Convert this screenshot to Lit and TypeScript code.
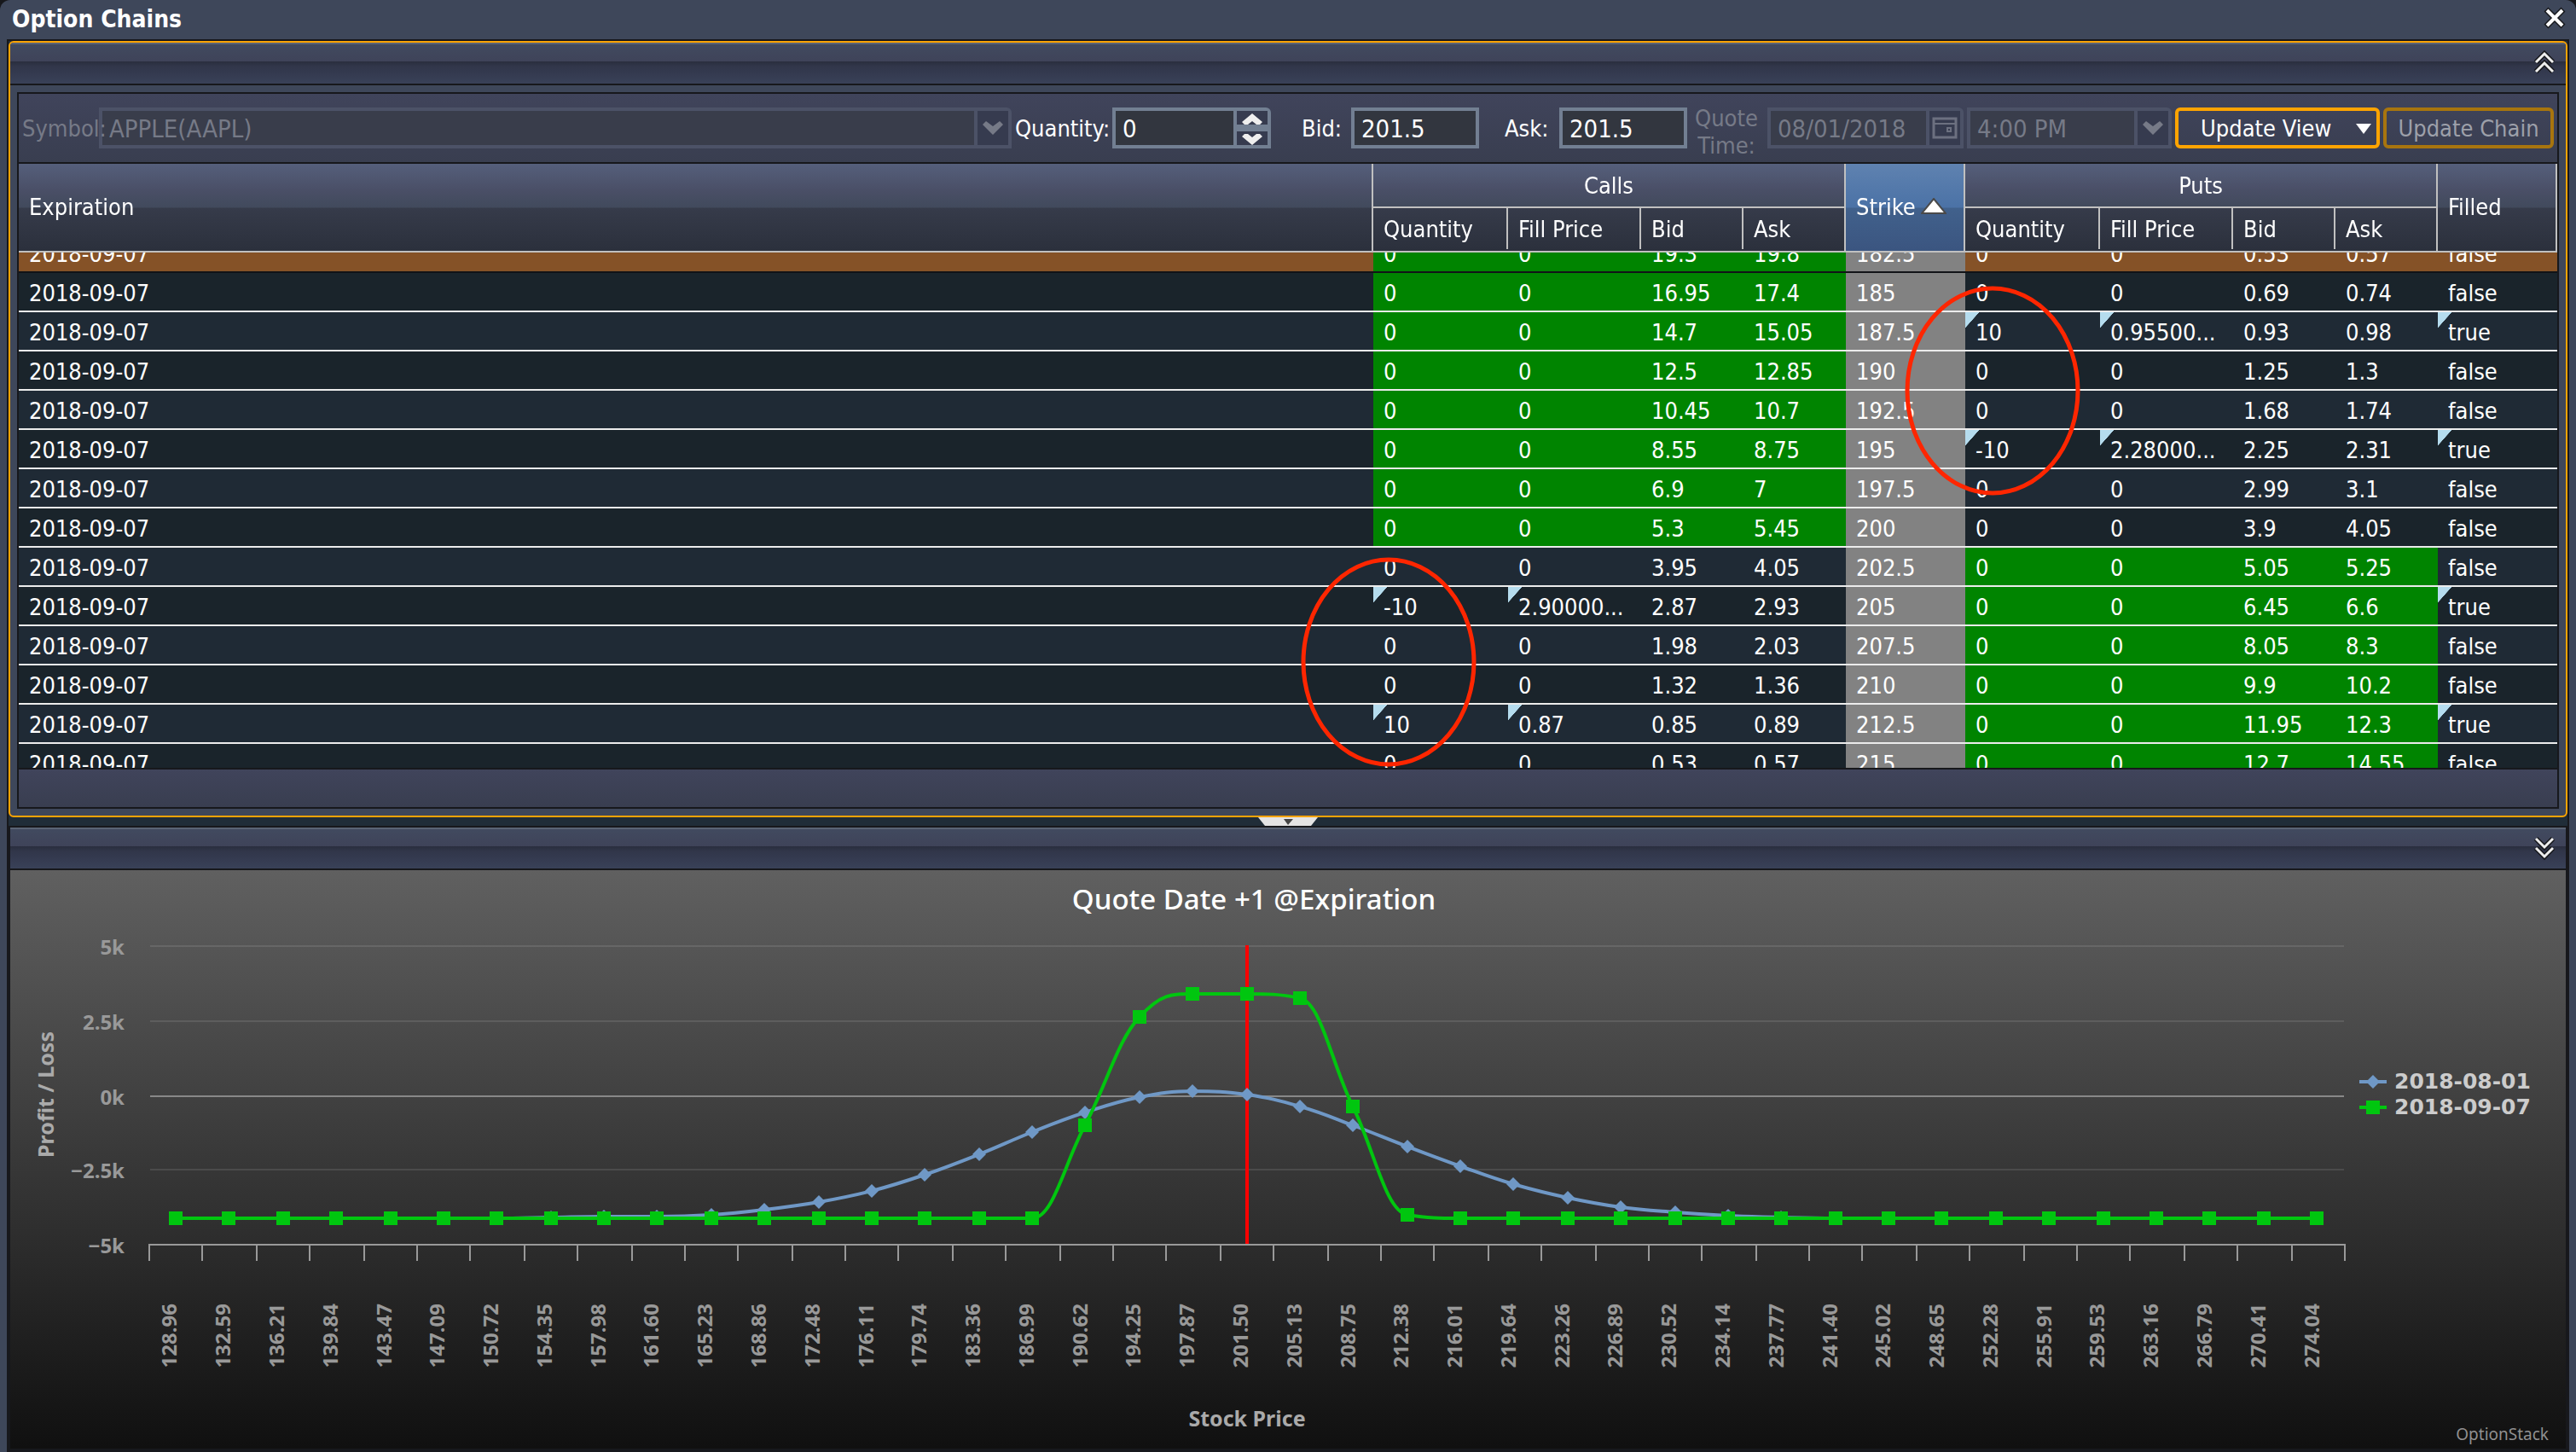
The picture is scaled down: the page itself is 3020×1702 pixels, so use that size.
import { LitElement, html, svg, css } from "lit";
import { customElement, state } from "lit/decorators.js";
import { classMap } from "lit/directives/class-map.js";

interface Side {
  quantity: string;
  fill: string;
  bid: string;
  ask: string;
}

interface OptionRow {
  expiration: string;
  strike: number;
  calls: Side;
  puts: Side;
  filled: boolean;
  selected?: boolean;
}

const EXPIRATION = "2018-09-07";
const SPOT = 201.5;

const side = (bid: string, ask: string, quantity = "0", fill = "0"): Side => ({ quantity, fill, bid, ask });

const row = (strike: number, calls: Side, puts: Side, selected = false): OptionRow => ({
  expiration: EXPIRATION,
  strike,
  calls,
  puts,
  filled: calls.quantity !== "0" || puts.quantity !== "0",
  selected,
});

const ROWS: OptionRow[] = [
  row(182.5, side("19.3", "19.8"), side("0.53", "0.57"), true),
  row(185, side("16.95", "17.4"), side("0.69", "0.74")),
  row(187.5, side("14.7", "15.05"), side("0.93", "0.98", "10", "0.95500...")),
  row(190, side("12.5", "12.85"), side("1.25", "1.3")),
  row(192.5, side("10.45", "10.7"), side("1.68", "1.74")),
  row(195, side("8.55", "8.75"), side("2.25", "2.31", "-10", "2.28000...")),
  row(197.5, side("6.9", "7"), side("2.99", "3.1")),
  row(200, side("5.3", "5.45"), side("3.9", "4.05")),
  row(202.5, side("3.95", "4.05"), side("5.05", "5.25")),
  row(205, side("2.87", "2.93", "-10", "2.90000..."), side("6.45", "6.6")),
  row(207.5, side("1.98", "2.03"), side("8.05", "8.3")),
  row(210, side("1.32", "1.36"), side("9.9", "10.2")),
  row(212.5, side("0.85", "0.89", "10", "0.87"), side("11.95", "12.3")),
  row(215, side("0.53", "0.57"), side("12.7", "14.55")),
];

const PRICES = [
  "128.96", "132.59", "136.21", "139.84", "143.47", "147.09", "150.72", "154.35", "157.98", "161.60", "165.23",
  "168.86", "172.48", "176.11", "179.74", "183.36", "186.99", "190.62", "194.25", "197.87", "201.50", "205.13",
  "208.75", "212.38", "216.01", "219.64", "223.26", "226.89", "230.52", "234.14", "237.77", "241.40", "245.02",
  "248.65", "252.28", "255.91", "259.53", "263.16", "266.79", "270.41", "274.04",
];

/* Profit and loss in dollars, one value for each stock price. */
const fill = (n: number, v: number): number[] => new Array<number>(n).fill(v);
const EXPIRY_PL = [...fill(17, -4115), -1000, 2630, 3390, 3390, 3260, -370, -4000, ...fill(17, -4115)];
const TODAY_PL = [
  ...fill(7, -4115), -4090, -4070, -4050, -4000, -3840, -3585, -3200, -2655, -1970, -1225, -570, -55, 143, 30, -370,
  -1000, -1715, -2385, -2970, -3430, -3730, -3915, -4030, -4085, ...fill(10, -4115),
];

const PLOT = { left: 163, right: 2737, top: 89, bottom: 439 };
const STEP = (PLOT.right - PLOT.left) / PRICES.length;
const FIRST_POINT = 194;
const LAST_POINT = 2704;
const even = (v: number): number => Math.round(v / 2) * 2;
const odd = (v: number): number => Math.round((v - 1) / 2) * 2 + 1;
const xOf = (i: number): number => even(FIRST_POINT + (i * (LAST_POINT - FIRST_POINT)) / (PRICES.length - 1));
const yOf = (v: number): number => Math.round(PLOT.top + ((5000 - v) / 10000) * (PLOT.bottom - PLOT.top));

type Point = [number, number];

function spline(points: Point[]): string {
  let d = `M${points[0][0]} ${points[0][1]}`;
  let out: Point = points[0];
  for (let i = 1; i < points.length; i++) {
    const [lx, ly] = points[i - 1];
    const [x, y] = points[i];
    let inn: Point = [x, y];
    let next: Point = [x, y];
    if (i < points.length - 1) {
      const [nx, ny] = points[i + 1];
      const ax = (1.5 * x + lx) / 2.5;
      const bx = (1.5 * x + nx) / 2.5;
      let ay = (1.5 * y + ly) / 2.5;
      let by = (1.5 * y + ny) / 2.5;
      const correction = ((by - ay) * (bx - x)) / (bx - ax) + y - by;
      ay += correction;
      by += correction;
      if (ay > ly && ay > y) {
        ay = Math.max(ly, y);
        by = 2 * y - ay;
      } else if (ay < ly && ay < y) {
        ay = Math.min(ly, y);
        by = 2 * y - ay;
      }
      if (by > ny && by > y) {
        by = Math.max(ny, y);
        ay = 2 * y - by;
      } else if (by < ny && by < y) {
        by = Math.min(ny, y);
        ay = 2 * y - by;
      }
      inn = [ax, ay];
      next = [bx, by];
    }
    d += `C${out[0]} ${out[1]} ${inn[0]} ${inn[1]} ${x} ${y}`;
    out = next;
  }
  return d;
}

@customElement("payoff-chart")
export class PayoffChart extends LitElement {
  static styles = css`
    :host {
      display: block;
      min-height: 0;
      background: linear-gradient(#606060, #101010);
    }
    .chart {
      display: block;
      width: 100%;
      height: 100%;
    }
    .title {
      font: 500 33px "Noto Sans", sans-serif;
      fill: #fff;
      text-anchor: middle;
    }
    .tick-label {
      font: bold 24px "Noto Sans", sans-serif;
      fill: #999;
      text-anchor: end;
    }
    .axis-title {
      font: bold 25px "Noto Sans", sans-serif;
      fill: #aaa;
      text-anchor: middle;
    }
    .legend-label {
      font: bold 25px "DejaVu Sans", sans-serif;
      fill: #ccc;
    }
    .credit {
      font: 19px "Noto Sans", sans-serif;
      fill: #909090;
      text-anchor: end;
    }
    .grid {
      stroke: rgba(255, 255, 255, 0.1);
      stroke-width: 2;
    }
    .zero {
      stroke: #888;
      stroke-width: 2;
    }
    .axis {
      stroke: #999;
      stroke-width: 2;
    }
    .spot {
      stroke: #f00;
      stroke-width: 4;
    }
    .line {
      fill: none;
      stroke-width: 4;
      stroke-linejoin: round;
    }
    .today {
      stroke: #6f98c6;
    }
    .today-mark {
      fill: #6f98c6;
    }
    .expiry {
      stroke: #00c60f;
    }
    .expiry-mark {
      fill: #00c60f;
    }
  `;

  private diamond(x: number, y: number) {
    return svg`<path class="today-mark" d=${`M${x} ${y - 8}L${x + 8} ${y}L${x} ${y + 8}L${x - 8} ${y}Z`}></path>`;
  }

  private square(x: number, y: number) {
    return svg`<rect class="expiry-mark" x=${x - 8} y=${y - 8} width="16" height="16"></rect>`;
  }

  render() {
    const levels: [string, number][] = [["5k", 89], ["2.5k", 177], ["0k", 265], ["−2.5k", 351], ["−5k", 439]];
    const today = TODAY_PL.map((v, i): Point => [xOf(i), yOf(v)]);
    const expiry = EXPIRY_PL.map((v, i): Point => [xOf(i), yOf(v)]);
    const ticks = Array.from({ length: PRICES.length + 1 }, (_, i) => odd(PLOT.left + i * STEP));
    return html`
      <svg class="chart" viewBox="0 0 2996 678" role="img" aria-label="Profit and loss by stock price">
        <text class="title" x="1458" y="46">Quote Date +1 @Expiration</text>
        ${levels.map(
          ([label, y]) => svg`
            ${label === "−5k" ? null : svg`<line class=${label === "0k" ? "zero" : "grid"} x1="164" x2="2736" y1=${y} y2=${y}></line>`}
            <text class="tick-label" x="134" y=${y + 10}>${label}</text>`
        )}
        <line class="axis" x1="162" x2="2738" y1="439" y2="439"></line>
        ${ticks.map((x) => svg`<line class="axis" x1=${x} x2=${x} y1="440" y2="458"></line>`)}
        ${PRICES.map((p, i) => {
          const x = Math.round(PLOT.left + (i + 0.5) * STEP) + 1;
          return svg`<text class="tick-label" x=${x} y="508" transform=${`rotate(-90 ${x} 508)`}>${p}</text>`;
        })}
        <text class="axis-title" x="51" y="263" transform="rotate(-90 51 263)">Profit / Loss</text>
        <text class="axis-title" x="1450" y="652">Stock Price</text>
        <line class="spot" x1="1450" x2="1450" y1="88" y2="438"></line>
        <path class="line today" d=${spline(today)}></path>
        ${today.map(([x, y]) => this.diamond(x, y))}
        <path class="line expiry" d=${spline(expiry)}></path>
        ${expiry.map(([x, y]) => this.square(x, y))}
        <line class="line today" x1="2754" x2="2786" y1="248" y2="248"></line>
        ${this.diamond(2770, 248)}
        <text class="legend-label" x="2795" y="256">2018-08-01</text>
        <line class="line expiry" x1="2754" x2="2786" y1="278" y2="278"></line>
        ${this.square(2770, 278)}
        <text class="legend-label" x="2795" y="286">2018-09-07</text>
        <text class="credit" x="2976" y="668">OptionStack</text>
      </svg>
    `;
  }
}

@customElement("chain-grid")
export class ChainGrid extends LitElement {
  static styles = css`
    :host {
      display: block;
      overflow: hidden;
      height: 708px;
    }
    .table {
      width: 100%;
      table-layout: fixed;
      border-spacing: 0;
      color: #fff;
      font: 27px/40px "DejaVu Sans Condensed", "DejaVu Sans", sans-serif;
    }
    .w-qty { width: 158px; }
    .w-fill { width: 156px; }
    .w-price { width: 120px; }
    .w-strike { width: 140px; }
    .head {
      position: sticky;
      top: 0;
      z-index: 1;
    }
    .th {
      box-sizing: border-box;
      height: 52px;
      padding: 0 10px 0 12px;
      font-weight: normal;
      line-height: 48px;
      text-align: left;
      white-space: nowrap;
      border-right: 2px solid #c0c0c0;
      border-bottom: 2px solid #c0c0c0;
      background: linear-gradient(#555f7b, #4a4f67 60%, #414a5c);
    }
    .tall {
      height: 104px;
      background: linear-gradient(#555f7b, #4a4f67 30%, #414a5c 50%, #363b4a 51%, #2b303c);
    }
    .sorted {
      padding-right: 0;
      background: linear-gradient(#5f82b0, #4b72a6 50%, #41618c 51%, #3b5580);
    }
    .group {
      text-align: center;
      padding: 2px 0 0;
    }
    .sub {
      border-right: 0;
      background:
        linear-gradient(#c0c0c0, #c0c0c0) right top / 2px 48px no-repeat,
        linear-gradient(#363b4a, #2b303c);
    }
    .sub-last {
      border-right: 2px solid #c0c0c0;
      background: linear-gradient(#363b4a, #2b303c);
    }
    .arrow {
      vertical-align: middle;
      margin: 0 0 6px 6px;
    }
    .row { background: #1f2a35; }
    .alt { background: #1a242b; }
    .selected { background: #855227; }
    .td {
      box-sizing: border-box;
      height: 46px;
      padding: 4px 0 0 12px;
      overflow: hidden;
      white-space: nowrap;
      border-bottom: 2px solid #ececec;
    }
    .selected .td { border-bottom-color: #111317; }
    .money { background-color: #008400; }
    .strike { background-color: #828282; }
    .dirty {
      background-image: linear-gradient(to bottom right, #b5dcee 50%, transparent 52%);
      background-repeat: no-repeat;
      background-size: 16px 18px;
    }
  `;

  firstUpdated() {
    this.scrollTop = 22;
  }

  private sideCells(s: Side, inTheMoney: boolean) {
    const dirty = s.quantity !== "0";
    const edit = classMap({ td: true, money: inTheMoney, dirty });
    const plain = classMap({ td: true, money: inTheMoney });
    return html`<td class=${edit}>${s.quantity}</td><td class=${edit}>${s.fill}</td><td class=${plain}>${s.bid}</td><td class=${plain}>${s.ask}</td>`;
  }

  render() {
    const subs = html`
      <th class="th sub" scope="col">Quantity</th>
      <th class="th sub" scope="col">Fill Price</th>
      <th class="th sub" scope="col">Bid</th>
      <th class="th sub sub-last" scope="col">Ask</th>
    `;
    const sideCols = html`<col class="w-qty" /><col class="w-fill" /><col class="w-price" /><col class="w-price" />`;
    return html`
      <table class="table">
        <colgroup>
          <col />${sideCols}<col class="w-strike" />${sideCols}<col class="w-strike" />
        </colgroup>
        <thead class="head">
          <tr>
            <th class="th tall" rowspan="2" scope="col">Expiration</th>
            <th class="th group" colspan="4" scope="colgroup">Calls</th>
            <th class="th tall sorted" rowspan="2" scope="col" aria-sort="ascending">
              Strike<svg class="arrow" width="30" height="20" viewBox="0 0 30 20">
                <path d="M15 1L29 18H1Z" fill="#fff" stroke="#4a4a4a" stroke-width="2"></path>
              </svg>
            </th>
            <th class="th group" colspan="4" scope="colgroup">Puts</th>
            <th class="th tall" rowspan="2" scope="col">Filled</th>
          </tr>
          <tr>${subs}${subs}</tr>
        </thead>
        <tbody>
          ${ROWS.map(
            (r, i) => html`
              <tr class=${classMap({ row: true, alt: i % 2 === 1, selected: !!r.selected })}>
                <td class="td">${r.expiration}</td>
                ${this.sideCells(r.calls, r.strike < SPOT)}
                <td class="td strike">${r.strike}</td>
                ${this.sideCells(r.puts, r.strike > SPOT)}
                <td class=${classMap({ td: true, dirty: r.filled })}>${r.filled}</td>
              </tr>
            `
          )}
        </tbody>
      </table>
    `;
  }
}

@customElement("app-root")
export class AppRoot extends LitElement {
  static styles = css`
    :host {
      display: block;
      background: #17181c;
      font: 27px/32px "DejaVu Sans Condensed", "DejaVu Sans", sans-serif;
      color: #fff;
    }
    .window {
      position: relative;
      box-sizing: border-box;
      display: flex;
      flex-direction: column;
      height: 100vh;
      padding: 0 8px;
      border-radius: 12px 12px 0 0;
      background: #3e475a;
    }
    .titlebar {
      display: flex;
      align-items: center;
      justify-content: space-between;
      height: 46px;
      padding: 0 4px 0 6px;
    }
    .heading {
      margin: 0;
      font-size: 28px;
      line-height: 46px;
      font-weight: bold;
    }
    .tool {
      display: flex;
      padding: 0;
      border: 0;
      background: none;
    }
    .titlebar .tool { padding-bottom: 4px; }
    .body {
      flex: 1;
      min-height: 0;
      display: flex;
      flex-direction: column;
      border: 2px solid #17181c;
      border-bottom: 0;
      background: #202d38;
    }
    .panel {
      border: 2px solid #ffa400;
      border-radius: 6px;
      background: #3e475a;
      overflow: hidden;
    }
    .panel-head {
      display: flex;
      align-items: center;
      justify-content: flex-end;
      height: 46px;
      padding-right: 12px;
      border-top: 2px solid #5a6475;
      border-bottom: 2px solid #17181c;
      background: linear-gradient(#414a5f, #3f4359 44%, #2a2e3e 44%, #31364a 56%, #394158);
    }
    .panel-head .tool { padding-bottom: 2px; }
    .content {
      margin: 8px;
      border: 2px solid #17181c;
    }
    .toolbar {
      display: flex;
      align-items: center;
      height: 80px;
      padding: 0 4px;
      border-bottom: 2px solid #17181c;
      background: linear-gradient(#40445b, #393e50);
    }
    .footer {
      height: 44px;
      border-top: 2px solid #17181c;
      background: linear-gradient(#40445b, #393e50);
    }
    .label {
      flex: none;
      z-index: 1;
      padding-top: 2px;
      white-space: nowrap;
    }
    .muted { color: #767a87; }
    .l-symbol { width: 90px; }
    .l-quantity { width: 114px; margin-left: 4px; }
    .l-bid { width: 58px; margin-left: 36px; }
    .l-ask { width: 64px; margin-left: 30px; }
    .l-quote { width: 84px; margin: 8px 6px 0 4px; white-space: normal; text-align: center; }
    .field {
      box-sizing: border-box;
      flex: none;
      display: flex;
      height: 48px;
      border: 4px solid #727f92;
      background: #32363f;
    }
    .off {
      border-color: #4c5267;
      background: #393d4b;
    }
    .f-symbol { flex: 1; min-width: 200px; border-top-right-radius: 6px; }
    .f-quantity { width: 186px; border-top-right-radius: 6px; }
    .f-price { width: 150px; }
    .f-date { width: 230px; border-top-right-radius: 6px; }
    .f-time { width: 240px; margin-left: 4px; border-top-right-radius: 6px; }
    .control {
      appearance: none;
      box-sizing: border-box;
      flex: 1;
      min-width: 0;
      width: 100%;
      height: 40px;
      margin: 0;
      padding: 2px 0 0 8px;
      border: 0;
      border-radius: 0;
      outline: 0;
      background: none;
      color: #fff;
      font: 29px/38px "DejaVu Sans Condensed", "DejaVu Sans", sans-serif;
    }
    .off .control {
      color: #767a87;
      opacity: 1;
    }
    .trigger {
      box-sizing: border-box;
      flex: none;
      display: flex;
      align-items: center;
      justify-content: center;
      width: 40px;
      height: 40px;
      padding: 0;
      border: 0;
      border-left: 4px solid #4c5267;
      background: #363b4f;
    }
    .spinner {
      flex: none;
      display: flex;
      flex-direction: column;
      justify-content: space-between;
      width: 36px;
      border-left: 4px solid #727f92;
      background: #727f92;
    }
    .spin {
      display: flex;
      align-items: flex-end;
      justify-content: center;
      height: 16px;
      padding: 0;
      border: 0;
      background: #363b4f;
    }
    .button {
      box-sizing: border-box;
      flex: none;
      display: flex;
      align-items: center;
      justify-content: center;
      height: 48px;
      margin-left: 4px;
      padding: 2px 0 0;
      border: 4px solid #ffa400;
      border-radius: 6px;
      background: none;
      color: #fff;
      font: inherit;
    }
    .b-view { width: 240px; padding: 2px 6px 0 26px; justify-content: space-between; }
    .b-chain { width: 200px; border-color: #a8750e; color: #9da0aa; }
    .splitter {
      display: flex;
      justify-content: center;
      height: 10px;
    }
    .lower {
      flex: 1;
      min-height: 0;
      display: flex;
      flex-direction: column;
      border: 2px solid #17181c;
      border-bottom-width: 4px;
    }
    .lower .panel-head { flex: none; }
    .plot { flex: 1; }
    .marks {
      position: absolute;
      z-index: 2;
      inset: 0;
      width: 100%;
      height: 100%;
      pointer-events: none;
    }
  `;

  @state() private quantity = 0;

  private spin(by: number) {
    this.quantity += by;
  }

  private downIcon() {
    return html`<svg width="24" height="16" viewBox="0 0 24 16"><path d="M0 4L4 0L12 6L20 0L24 4L12 16Z" fill="#767a87"></path></svg>`;
  }

  private doubleChevron(up: boolean) {
    const d = up ? "M3 14L13 4L23 14M3 25L13 15L23 25" : "M3 4L13 14L23 4M3 15L13 25L23 15";
    return html`<svg width="26" height="30" viewBox="0 0 26 30" fill="none">
      <path d=${d} stroke="#17181c" stroke-width="6"></path>
      <path d=${d} stroke="#eee" stroke-width="3"></path>
    </svg>`;
  }

  render() {
    return html`
      <main class="window">
        <header class="titlebar">
          <h1 class="heading">Option Chains</h1>
          <button class="tool" aria-label="Close">
            <svg width="26" height="26" viewBox="0 0 26 26" fill="none">
              <path d="M3 3L23 23M23 3L3 23" stroke="#17181c" stroke-width="7"></path>
              <path d="M4 4L22 22M22 4L4 22" stroke="#fff" stroke-width="4"></path>
            </svg>
          </button>
        </header>
        <div class="body">
          <section class="panel">
            <div class="panel-head">
              <button class="tool" aria-label="Collapse chain panel">${this.doubleChevron(true)}</button>
            </div>
            <div class="content">
              <div class="toolbar">
                <label class="label muted l-symbol" for="symbol">Symbol:</label>
                <span class="field off f-symbol">
                  <select class="control" id="symbol" disabled><option>APPLE(AAPL)</option></select>
                  <span class="trigger">${this.downIcon()}</span>
                </span>
                <label class="label l-quantity" for="quantity">Quantity:</label>
                <span class="field f-quantity">
                  <input class="control" id="quantity" type="text" .value=${String(this.quantity)} />
                  <span class="spinner">
                    <button class="spin" aria-label="Increase" @click=${() => this.spin(1)}>
                      <svg width="26" height="13" viewBox="0 0 26 13"><path d="M13 0L25 10L22 13H18L13 9L8 13H4L1 10Z" fill="#eee"></path></svg>
                    </button>
                    <button class="spin" aria-label="Decrease" @click=${() => this.spin(-1)}>
                      <svg width="26" height="13" viewBox="0 0 26 13"><path d="M13 13L25 3L22 0H18L13 4L8 0H4L1 3Z" fill="#eee"></path></svg>
                    </button>
                  </span>
                </span>
                <label class="label l-bid" for="bid">Bid:</label>
                <span class="field f-price"><input class="control" id="bid" type="text" value="201.5" /></span>
                <label class="label l-ask" for="ask">Ask:</label>
                <span class="field f-price"><input class="control" id="ask" type="text" value="201.5" /></span>
                <label class="label muted l-quote" for="quote-date">Quote Time:</label>
                <span class="field off f-date">
                  <input class="control" id="quote-date" type="text" value="08/01/2018" disabled />
                  <button class="trigger" aria-label="Pick a date" disabled>
                    <svg width="30" height="28" viewBox="0 0 30 28" fill="none" stroke="#6c7080">
                      <rect x="2" y="3" width="26" height="22" stroke-width="3"></rect>
                      <path d="M2 9H28" stroke-width="2"></path>
                      <rect x="18" y="14" width="4" height="4" stroke-width="2"></rect>
                    </svg>
                  </button>
                </span>
                <span class="field off f-time">
                  <select class="control" id="quote-time" aria-label="Quote time of day" disabled><option>4:00 PM</option></select>
                  <span class="trigger">${this.downIcon()}</span>
                </span>
                <button class="button b-view">
                  Update View
                  <svg width="18" height="12" viewBox="0 0 18 12"><path d="M0 0H18L9 12Z" fill="#fff"></path></svg>
                </button>
                <button class="button b-chain" disabled>Update Chain</button>
              </div>
              <chain-grid></chain-grid>
              <div class="footer"></div>
            </div>
          </section>
          <div class="splitter">
            <svg width="70" height="10" viewBox="0 0 70 10">
              <path d="M0 0H70L62 10H8Z" fill="#e4e4e4"></path>
              <path d="M30 2H41L35 9Z" fill="#444"></path>
            </svg>
          </div>
          <section class="lower">
            <div class="panel-head">
              <button class="tool" aria-label="Collapse chart panel">${this.doubleChevron(false)}</button>
            </div>
            <payoff-chart class="plot"></payoff-chart>
          </section>
        </div>
        <svg class="marks" viewBox="0 0 3020 1702" fill="none" stroke="#ff2600" stroke-width="5" aria-hidden="true">
          <ellipse cx="2336" cy="458" rx="100" ry="120"></ellipse>
          <ellipse cx="1628" cy="776" rx="100" ry="120"></ellipse>
        </svg>
      </main>
    `;
  }
}
